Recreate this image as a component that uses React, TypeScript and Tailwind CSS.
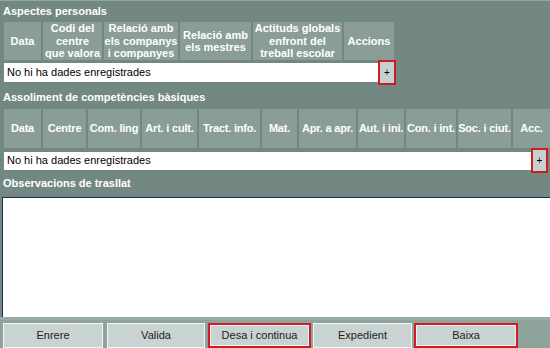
import React from "react";

const H1 = [
  { w: "w-[37px]", t: ["Data"] },
  { w: "w-[59px]", t: ["Codi del", "centre", "que valora"] },
  { w: "w-[74px]", t: ["Relació amb", "els companys", "i companyes"] },
  { w: "w-[71px]", t: ["Relació amb", "els mestres"] },
  { w: "w-[89px]", t: ["Actituds globals", "enfront del", "treball escolar"] },
  { w: "w-[50px]", t: ["Accions"] },
];

const H2 = [
  { w: "w-[37px]", t: "Data" },
  { w: "w-[43px]", t: "Centre" },
  { w: "w-[52px]", t: "Com. ling" },
  { w: "w-[55px]", t: "Art. i cult." },
  { w: "w-[61px]", t: "Tract. info." },
  { w: "w-[35px]", t: "Mat." },
  { w: "w-[57px]", t: "Apr. a apr." },
  { w: "w-[46px]", t: "Aut. i ini." },
  { w: "w-[50px]", t: "Con. i int." },
  { w: "w-[53px]", t: "Soc. i ciut." },
  { w: "w-[37px]", t: "Acc." },
];

function Title({ children, cls }: { children: React.ReactNode; cls: string }) {
  return (
    <div className={`flex items-center pl-[3px] text-[11px] font-bold text-white ${cls}`}>
      {children}
    </div>
  );
}

function PlusBtn({ w }: { w: string }) {
  return (
    <div className={`${w} h-[25px] border-2 border-[#cf1b23] bg-[#c6d0ce] flex items-center justify-center text-[10px] leading-none text-black`}>
      +
    </div>
  );
}

function Btn({ label, red, w }: { label: string; red?: boolean; w: string }) {
  return (
    <div
      className={`${w} h-[25px] flex items-center justify-center text-[11px] text-[#222] bg-[#c9d3d1] ${
        red ? "border-2 border-[#d11a22] shadow-[inset_0_0_0_1px_#eef2f1]" : "border border-[#f3f6f5]"
      }`}
    >
      {label}
    </div>
  );
}

export default function App() {
  return (
    <div
      className="w-[550px] h-[348px] overflow-hidden bg-[#738882] flex flex-col"
      style={{ fontFamily: '"Liberation Sans", Arial, sans-serif' }}
    >
      <div className="h-[1px] bg-[#93a6a0]" />
      <Title cls="h-[21px]">Aspectes personals</Title>
      <div className="flex gap-[2px] pl-[4px] h-[38px]">
        {H1.map((c, i) => (
          <div
            key={i}
            className={`${c.w} bg-[#8a9d97] flex flex-col items-center justify-center text-[11px] font-bold leading-[12.5px] text-white whitespace-nowrap`}
          >
            {c.t.map((l, j) => (
              <span key={j}>{l}</span>
            ))}
          </div>
        ))}
      </div>
      <div className="flex items-center pl-[4px] h-[25px]">
        <div className="w-[374px] h-[19px] bg-white flex items-center pl-[3px] text-[11px] text-black">
          No hi ha dades enregistrades
        </div>
        <PlusBtn w="w-[18px]" />
      </div>
      <Title cls="h-[24px]">Assoliment de competències bàsiques</Title>
      <div className="flex gap-[2px] pl-[4px] h-[39px]">
        {H2.map((c, i) => (
          <div
            key={i}
            className={`${c.w} bg-[#8a9d97] flex items-center justify-center text-[11px] font-bold text-white whitespace-nowrap tracking-[-0.2px]`}
          >
            {c.t}
          </div>
        ))}
      </div>
      <div className="flex items-center pl-[4px] h-[25px]">
        <div className="w-[527px] h-[18px] bg-white flex items-center pl-[3px] text-[11px] text-black">
          No hi ha dades enregistrades
        </div>
        <PlusBtn w="w-[17px]" />
      </div>
      <Title cls="h-[24px] pb-[4px]">Observacions de trasllat</Title>
      <div className="ml-[2px] h-[120px] bg-white border-t border-l border-[#1c2a5e]" />
      <div className="flex-1 bg-[#8fa39d] flex flex-col">
        <div className="h-[3px] bg-[#9aaca6]" />
        <div className="flex pl-[3px] pt-[3px]">
          <Btn label="Enrere" w="w-[100px]" />
          <div className="w-[4px]" />
          <Btn label="Valida" w="w-[98px]" />
          <div className="w-[3px]" />
          <Btn label="Desa i continua" red w="w-[103px]" />
          <div className="w-[2px]" />
          <Btn label="Expedient" w="w-[99px]" />
          <div className="w-[2px]" />
          <Btn label="Baixa" red w="w-[104px]" />
        </div>
      </div>
    </div>
  );
}
